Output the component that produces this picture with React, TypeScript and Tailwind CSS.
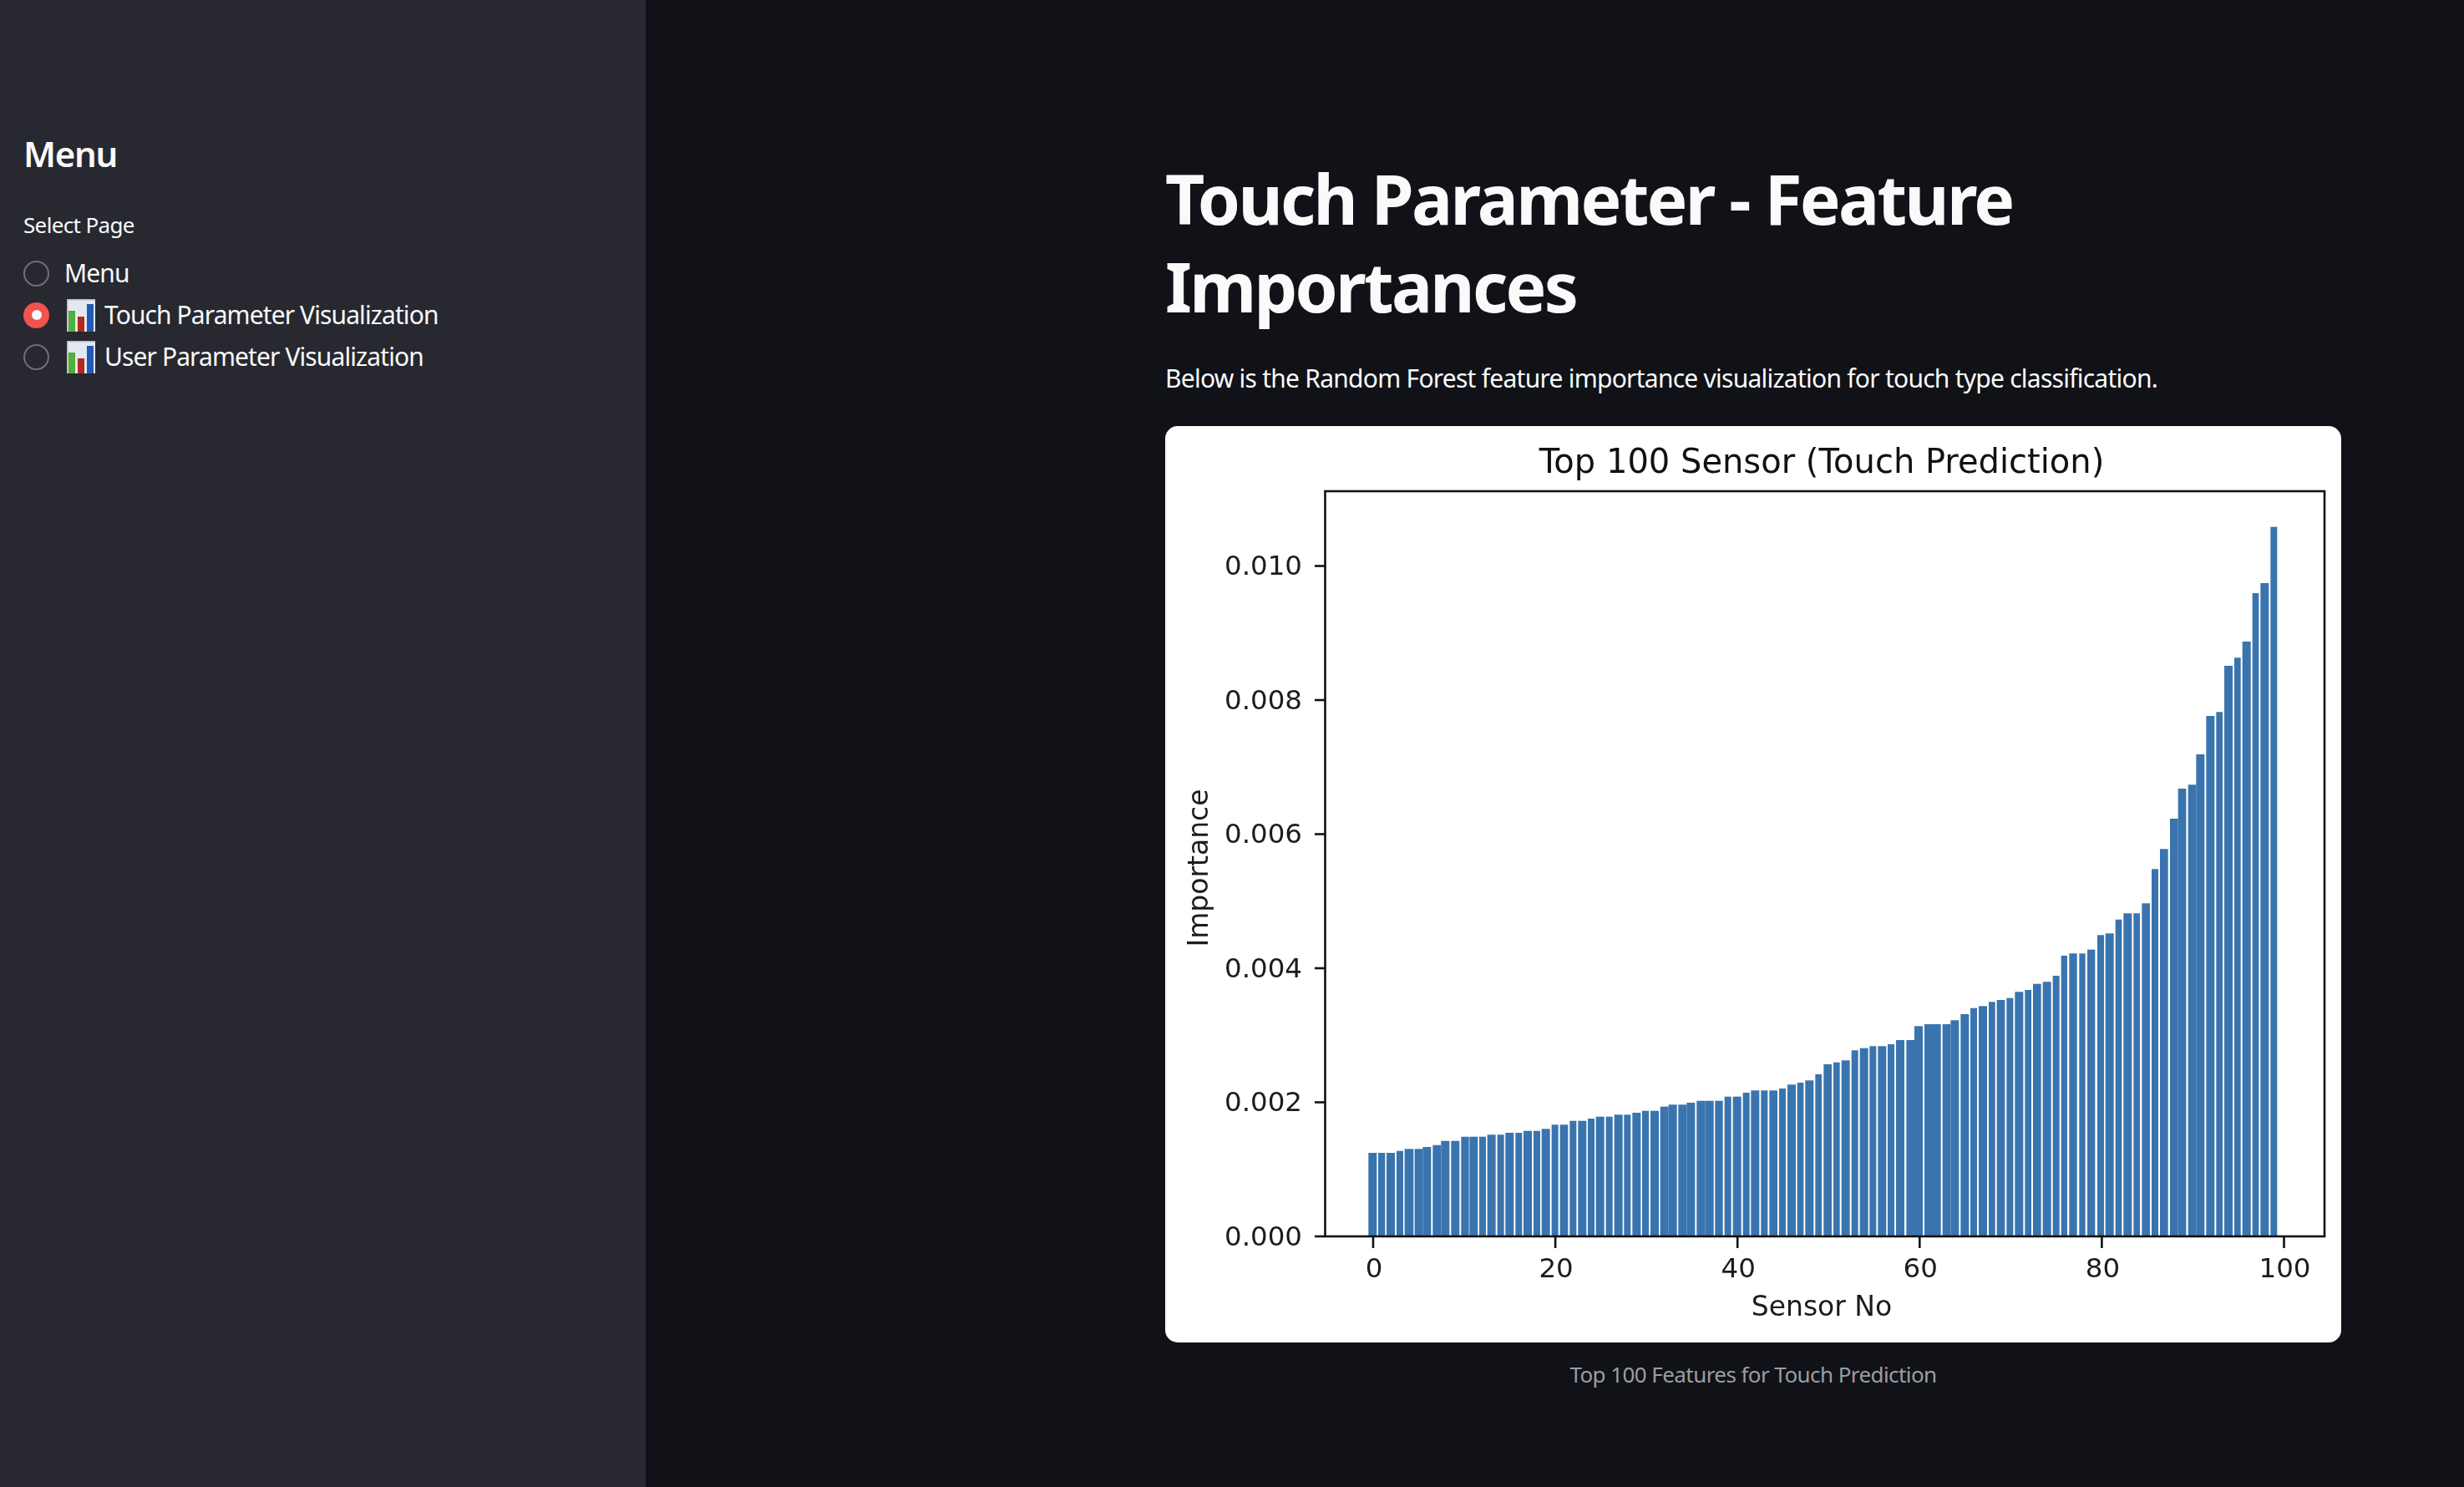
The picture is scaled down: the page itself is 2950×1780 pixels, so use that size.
import React from 'react';

// bar data read off the plot: [left, right, height], left/right are 3x px from the segment origin
const seg1 = [
  [25, 55, 100], [60, 85, 100], [90, 120, 100], [126, 150, 102.3], [155, 187, 104.7], [191, 220, 104.7], [220, 250, 107],
  [256, 286, 109.3], [286, 316, 114.3], [322, 352, 114.3], [358, 386, 119.3], [388, 418, 119.3], [423, 447, 119.3],
  [452, 482, 121.7], [488, 512, 121.7], [517, 547, 124], [553, 577, 124], [582, 612, 126.3], [618, 642, 126.3],
  [647, 677, 128.7], [683, 707, 133.7], [713, 742, 133.7], [748, 772, 138.3], [778, 808, 138.3], [813, 837, 141],
  [842, 872, 143.3], [878, 902, 143.3], [908, 938, 145.7], [943, 967, 145.7], [973, 1003, 148], [1008, 1032, 150.3],
  [1038, 1068, 150.3], [1073, 1103, 155.3], [1103, 1133, 157.7], [1138, 1168, 157.7], [1168, 1198, 160],
  [1204, 1234, 162.3], [1234, 1265, 162.3], [1270, 1298, 162.3], [1304, 1328, 167.3], [1334, 1364, 167.3],
  [1370, 1394, 172], [1399, 1429, 174.7], [1435, 1459, 174.7], [1465, 1494, 174.7], [1500, 1524, 177], [1530, 1560, 181.7],
];
const seg2 = [
  [65, 88, 184], [94, 124, 186.7], [130, 153, 194], [160, 189, 206], [195, 218, 208.3], [224, 254, 210.7],
  [260, 284, 222.7], [290, 320, 225.3], [325, 349, 227.7], [355, 385, 227.7], [390, 414, 230], [420, 450, 235],
  [457, 486, 235], [486, 516, 251.7], [522, 552, 254], [552, 581, 254], [587, 616, 254], [616, 646, 258.7],
  [652, 682, 266], [687, 711, 273.3], [717, 747, 275.7], [753, 776, 280.7], [782, 811, 283], [817, 841, 285.3],
  [847, 877, 292.7], [883, 906, 295], [912, 941, 302.3], [947, 977, 304.7],
];
const seg3 = [
  [53, 77, 312], [83, 105, 336], [112, 140, 338.7], [148, 170, 338.7], [177, 205, 343.3], [213, 237, 360.7],
  [242, 272, 362.7], [278, 301, 379.3], [307, 337, 386.7], [343, 366, 386.7], [373, 402, 398.7], [408, 432, 439.7],
  [438, 467, 463.7], [474, 503, 500], [503, 532, 536], [539, 568, 540.7], [568, 598, 577], [604, 634, 623],
  [640, 663, 627.7], [669, 699, 683], [705, 728, 692.7], [734, 764, 712], [770, 793, 770], [799, 829, 782], [835, 859, 849.3],
];

const bars = [
  ...seg1.map(([l, r, h]) => ({ x: 235 + l / 3, w: (r - l) / 3, h })),
  ...seg2.map(([l, r, h]) => ({ x: 735 + l / 3, w: (r - l) / 3, h })),
  ...seg3.map(([l, r, h]) => ({ x: 1045 + l / 3, w: (r - l) / 3, h })),
];

const yTicks = ['0.000', '0.002', '0.004', '0.006', '0.008', '0.010'];
const xTicks = [0, 20, 40, 60, 80, 100];

const Chart = () => (
  <svg viewBox="0 0 1408 1097" className="block w-[1408px] h-[1097px] blur-[0.6px]">
    {bars.map((b, i) => (
      <rect key={i} x={b.x} y={970 - b.h} width={b.w} height={b.h} fill="#3a74ae" />
    ))}
    <rect x="191.5" y="78" width="1196.5" height="892" fill="none" stroke="#111" strokeWidth="2.6" />
    {yTicks.map((label, i) => {
      const y = 970 - i * 160.5;
      return (
        <g key={label}>
          <line x1="179" x2="191" y1={y} y2={y} stroke="#111" strokeWidth="2.6" />
          <text x="164" y={y + 10.5} textAnchor="end" fontSize="32.5" fontFamily="'DejaVu Sans', sans-serif" fill="#1c1c1c">
            {label}
          </text>
        </g>
      );
    })}
    {xTicks.map((v) => {
      const x = 249 + v * 10.905;
      return (
        <g key={v}>
          <line x1={x} x2={x} y1="971" y2="984" stroke="#111" strokeWidth="2.6" />
          <text x={x + 1} y="1019" textAnchor="middle" fontSize="32.5" fontFamily="'DejaVu Sans', sans-serif" fill="#1c1c1c">
            {v}
          </text>
        </g>
      );
    })}
    <text x="786" y="56" textAnchor="middle" fontSize="40" fontFamily="'DejaVu Sans', sans-serif" fill="#111">
      Top 100 Sensor (Touch Prediction)
    </text>
    <text x="786" y="1065" textAnchor="middle" fontSize="33" fontFamily="'DejaVu Sans', sans-serif" fill="#1c1c1c">
      Sensor No
    </text>
    <text
      x="51"
      y="529"
      transform="rotate(-90 51 529)"
      textAnchor="middle"
      fontSize="33"
      fontFamily="'DejaVu Sans', sans-serif"
      fill="#1c1c1c"
    >
      Importance
    </text>
  </svg>
);

// the bar chart emoji
const ChartEmoji = () => (
  <svg viewBox="0 0 34 39" className="w-[34px] h-[39px] shrink-0">
    <rect width="34" height="39" fill="#e3e9f1" />
    <rect width="34" height="1.5" fill="#b4bcc6" />
    <rect width="1.5" height="39" fill="#b4bcc6" />
    <rect x="2" y="14" width="8" height="25" fill="#4fb03a" />
    <rect x="13" y="21" width="8" height="18" fill="#b5281c" />
    <rect x="24" y="6" width="8" height="33" fill="#2159b8" />
  </svg>
);

const RadioRow = ({ label, emoji, selected }: { label: string; emoji?: boolean; selected?: boolean }) => (
  <div className="flex items-center h-[50px]">
    {selected ? (
      <span className="flex items-center justify-center w-[31px] h-[31px] rounded-full bg-[#f0544f] shrink-0">
        <span className="w-[12px] h-[12px] rounded-full bg-[#fafafa]" />
      </span>
    ) : (
      <span className="w-[31px] h-[31px] rounded-full border-2 border-[#6f7076] shrink-0" />
    )}
    <div className="flex items-center ml-[18px]">
      {emoji && (
        <span className="ml-[3px] mr-[11px]">
          <ChartEmoji />
        </span>
      )}
      <span className="text-[30px] leading-[44px] tracking-[-0.03em] text-[#fafafa]">{label}</span>
    </div>
  </div>
);

export default function App() {
  return (
    <div className="flex w-[2950px] h-[1780px] overflow-hidden bg-[#101218] font-['Noto_Sans',sans-serif]">
      <aside className="w-[773px] shrink-0 bg-[#272830] pl-[28px] pt-[154px]">
        <h2 className="text-[42px] leading-[60px] font-semibold tracking-[-0.03em] text-[#fafafa]">Menu</h2>
        <p className="mt-[37px] text-[26px] leading-[36px] tracking-[-0.025em] text-[#fafafa]">Select Page</p>
        <div className="mt-[15px] flex flex-col">
          <RadioRow label="Menu" />
          <RadioRow label="Touch Parameter Visualization" emoji selected />
          <RadioRow label="User Parameter Visualization" emoji />
        </div>
      </aside>
      <main className="flex-1 pl-[622px] pr-[147px] pt-[185px]">
        <h1 className="text-[82px] leading-[105px] font-bold tracking-[-0.033em] text-[#fafafa]">
          Touch Parameter - Feature
          <br />
          Importances
        </h1>
        <p className="mt-[36px] text-[30px] leading-[44px] tracking-[-0.025em] text-[#fafafa]">
          Below is the Random Forest feature importance visualization for touch type classification.
        </p>
        <div className="mt-[35px] rounded-[15px] bg-white overflow-hidden">
          <Chart />
        </div>
        <p className="mt-[20px] text-center text-[26px] leading-[36px] tracking-[-0.022em] text-[#9c9da1]">
          Top 100 Features for Touch Prediction
        </p>
      </main>
    </div>
  );
}
